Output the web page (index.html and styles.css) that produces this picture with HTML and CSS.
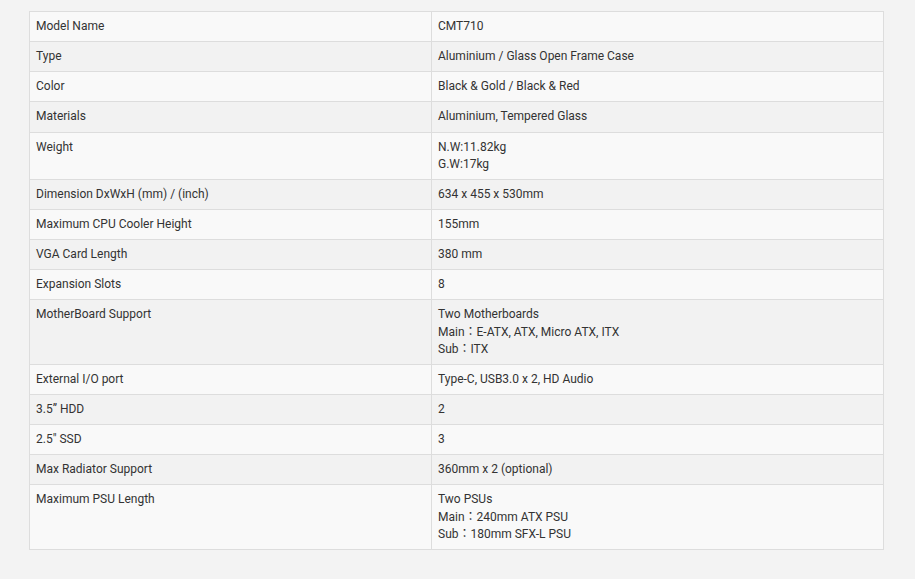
FILE: index.html
```html
<!DOCTYPE html>
<html>
<head>
<meta charset="utf-8">
<link rel="stylesheet" href="styles.css">
</head>
<body>
<div class="wrap">
<table class="spec">
<colgroup><col class="c1"><col class="c2"></colgroup>
<tbody>
<tr><td>Model Name</td><td>CMT710</td></tr>
<tr><td>Type</td><td>Aluminium / Glass Open Frame Case</td></tr>
<tr><td>Color</td><td>Black &amp; Gold / Black &amp; Red</td></tr>
<tr><td>Materials</td><td>Aluminium, Tempered Glass</td></tr>
<tr><td>Weight</td><td>N.W:11.82kg<br>G.W:17kg</td></tr>
<tr><td>Dimension DxWxH (mm) / (inch)</td><td>634 x 455 x 530mm</td></tr>
<tr><td>Maximum CPU Cooler Height</td><td>155mm</td></tr>
<tr><td>VGA Card Length</td><td>380 mm</td></tr>
<tr><td>Expansion Slots</td><td>8</td></tr>
<tr><td>MotherBoard Support</td><td>Two Motherboards<br>Main：E-ATX, ATX, Micro ATX, ITX<br>Sub：ITX</td></tr>
<tr><td>External I/O port</td><td>Type-C, USB3.0 x 2, HD Audio</td></tr>
<tr><td>3.5” HDD</td><td>2</td></tr>
<tr><td>2.5" SSD</td><td>3</td></tr>
<tr><td>Max Radiator Support</td><td>360mm x 2 (optional)</td></tr>
<tr><td>Maximum PSU Length</td><td>Two PSUs<br>Main：240mm ATX PSU<br>Sub：180mm SFX-L PSU</td></tr>
</tbody>
</table>
</div>
</body>
</html>
```
FILE: styles.css
```css
html, body {
  margin: 0;
  padding: 0;
  background: #f3f3f3;
}
.wrap {
  padding: 11px 31px 0 29px;
}
.spec {
  width: 855px;
  border-collapse: collapse;
  border: 1px solid #dddddd;
  font-family: Roboto, "Noto Sans CJK TC", sans-serif;
  font-size: 12px;
  line-height: 1.42857143;
  color: #333333;
}
.c1 { width: 402px; }
.spec td {
  border: 1px solid #dddddd;
  padding: 6px 6px;
  vertical-align: top;
  text-align: left;
}
.spec tr:nth-child(odd) td { background: #f9f9f9; }
.spec tr:nth-child(even) td { background: #f2f2f2; }
```
